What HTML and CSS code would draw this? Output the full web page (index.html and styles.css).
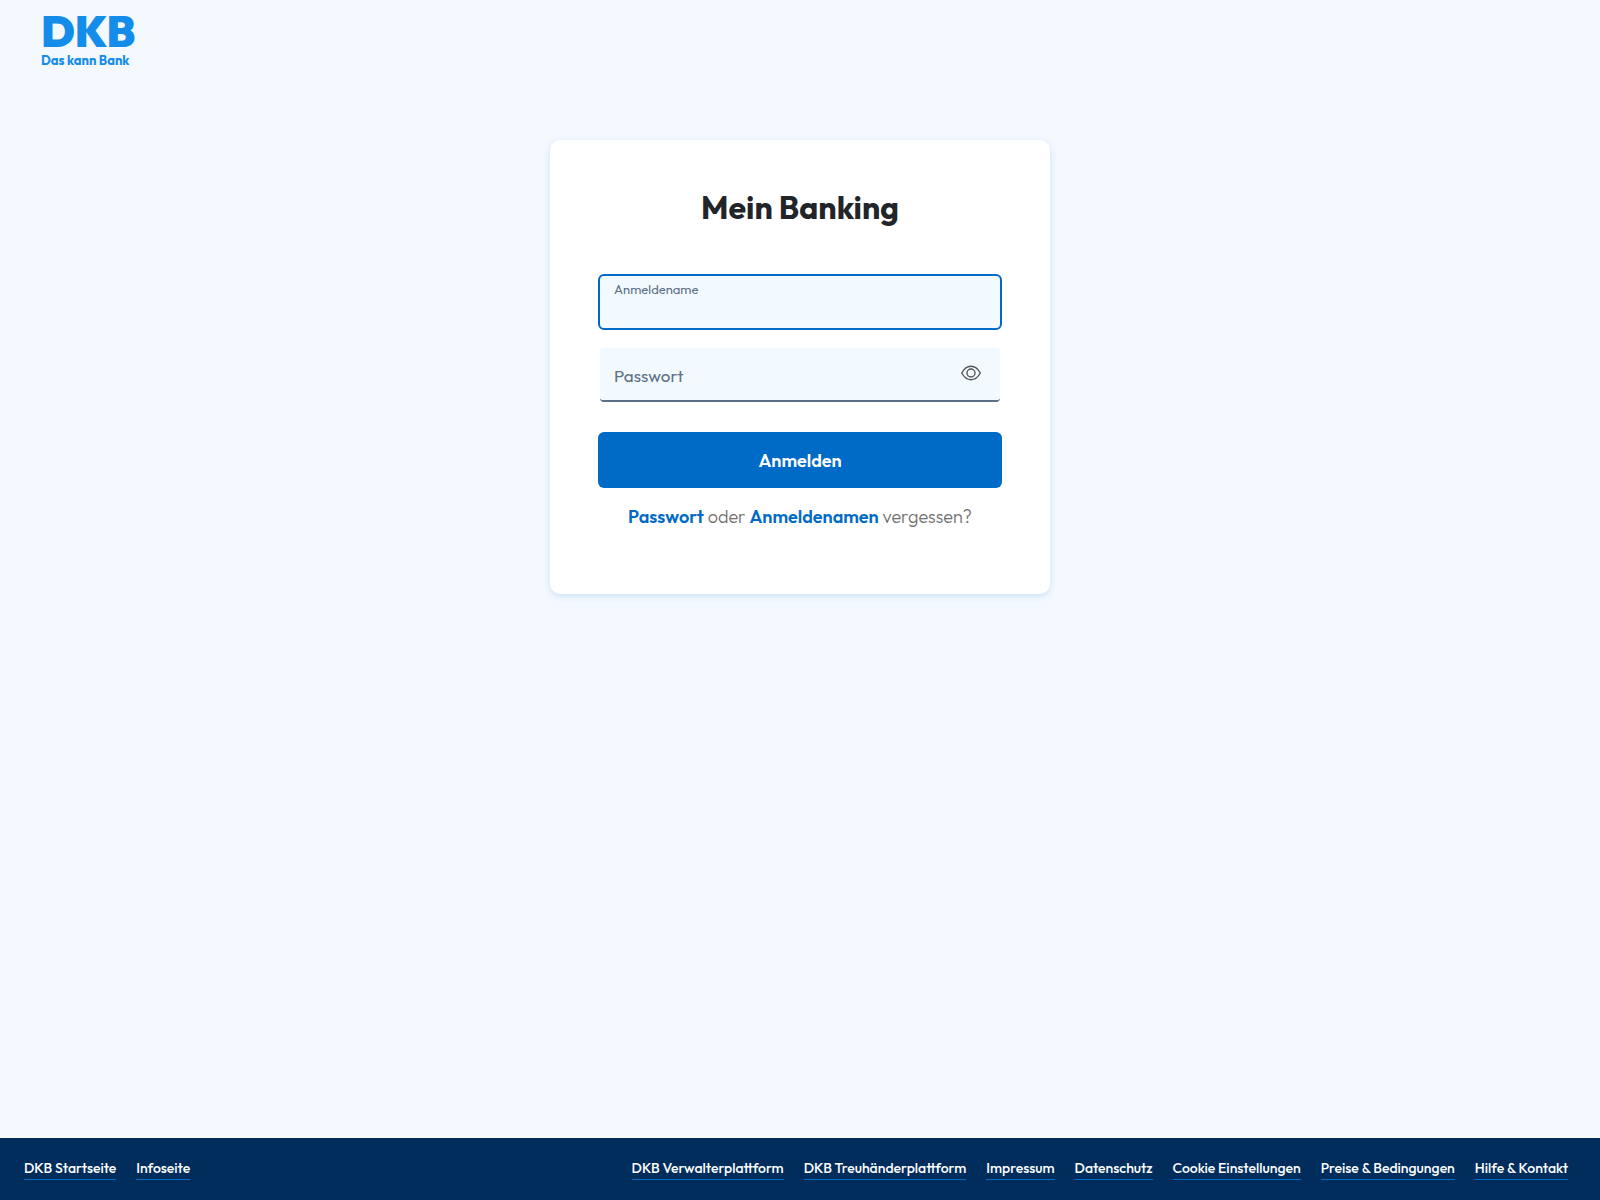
FILE: index.html
```html
<!DOCTYPE html>
<html lang="de">
<head>
<meta charset="utf-8">
<meta name="viewport" content="width=device-width, initial-scale=1">
<title>Mein Banking</title>
<link rel="stylesheet" href="styles.css">
</head>
<body>
<header class="header">
  <a class="logo" href="#">
    <span class="logo-name">DKB</span>
    <span class="logo-claim">Das kann Bank</span>
  </a>
</header>
<main class="main">
  <form class="card">
    <h1 class="title">Mein Banking</h1>
    <div class="field field-active">
      <label class="label-small" for="username">Anmeldename</label>
      <input class="input" id="username" type="text">
    </div>
    <div class="field field-password">
      <label class="label" for="password">Passwort</label>
      <input class="input" id="password" type="password">
      <button class="reveal" type="button" aria-label="Passwort anzeigen">
        <svg width="20" height="16" viewBox="0 0 20 16" fill="none" stroke="currentColor" stroke-width="1.4">
          <path d="M.7 8C2.800 4.200 6.100 1.300 10 1.300S17.200 4.200 19.300 8C17.200 11.800 13.900 14.700 10 14.700S2.800 11.800.7 8Z" stroke-linejoin="round"/>
          <circle cx="10" cy="8" r="4"/>
        </svg>
      </button>
    </div>
    <button class="submit" type="submit">Anmelden</button>
    <p class="forgot"><a href="#">Passwort</a> oder <a href="#">Anmeldenamen</a> vergessen?</p>
  </form>
</main>
<footer class="footer">
  <nav class="links">
    <a href="#">DKB Startseite</a>
    <a href="#">Infoseite</a>
  </nav>
  <nav class="links">
    <a href="#">DKB Verwalterplattform</a>
    <a href="#">DKB Treuhänderplattform</a>
    <a href="#">Impressum</a>
    <a href="#">Datenschutz</a>
    <a href="#">Cookie Einstellungen</a>
    <a href="#">Preise &amp; Bedingungen</a>
    <a href="#">Hilfe &amp; Kontakt</a>
  </nav>
</footer>
</body>
</html>
```
FILE: styles.css
```css
* {
  box-sizing: border-box;
}

body {
  margin: 0;
  min-height: 100vh;
  display: flex;
  flex-direction: column;
  background: #f4f8ff;
  color: #212529;
  font-family: Outfit, Lato, sans-serif;
}

a {
  text-decoration: none;
}

.header {
  padding: 8px 41px 0;
}

.logo {
  display: inline-flex;
  flex-direction: column;
  color: #148dea;
}

.logo-name {
  font-size: 44px;
  font-weight: 900;
  line-height: 46px;
}

.logo-claim {
  font-size: 13px;
  font-weight: 700;
  line-height: 12px;
}

.main {
  flex: 1;
  padding: 74px 24px;
}

.card {
  display: flex;
  flex-direction: column;
  width: 100%;
  max-width: 500px;
  margin: 0 auto;
  padding: 46px 48px 64px;
  border-radius: 10px;
  background: #fff;
  box-shadow: 0 2px 6px #c8e1f6;
}

.title {
  margin: 0 0 46px;
  font-size: 32px;
  font-weight: 700;
  line-height: 42px;
  text-align: center;
}

.field {
  display: flex;
  background: #f2f9ff;
  color: #5c7085;
}

.field-active {
  flex-direction: column;
  height: 56px;
  padding: 6px 14px;
  border: 2px solid #006ac7;
  border-radius: 6px;
}

.field-password {
  align-items: center;
  height: 54px;
  margin: 18px 2px 30px;
  padding: 4px 19px 0 14px;
  border-bottom: 2px solid #5c7085;
  border-radius: 4px;
}

.label-small {
  font-size: 13px;
  line-height: 14px;
}

.label {
  font-size: 17px;
  line-height: 24px;
}

.input {
  flex: 1;
  min-width: 0;
  padding: 0;
  border: 0;
  outline: 0;
  background: transparent;
  color: #212529;
  font: inherit;
}

.reveal {
  display: flex;
  padding: 0 0 6px;
  border: 0;
  background: none;
  color: #555;
}

.submit {
  height: 56px;
  padding: 2px 16px 0;
  border: 0;
  border-radius: 6px;
  background: #006ac7;
  color: #fff;
  font: 600 18px/24px Outfit, Lato, sans-serif;
}

.forgot {
  margin: 16px 0 0;
  color: #707070;
  font-size: 18px;
  font-weight: 300;
  line-height: 26px;
  text-align: center;
}

.forgot a {
  color: #006ac7;
  font-weight: 600;
}

.footer {
  display: flex;
  flex-wrap: wrap;
  justify-content: space-between;
  gap: 16px 20px;
  padding: 20px 32px 20px 24px;
  background: #002d5c;
}

.links {
  display: flex;
  flex-wrap: wrap;
  gap: 8px 20px;
}

.links a {
  border-bottom: 1px solid #006ac7;
  color: #fff;
  font-size: 14px;
  font-weight: 500;
  line-height: 21px;
}
```
